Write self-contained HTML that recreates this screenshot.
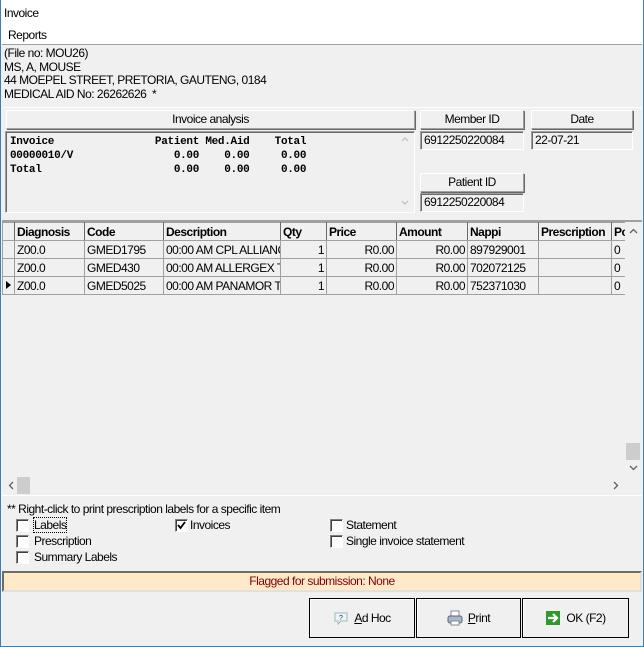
<!DOCTYPE html>
<html><head><style>
*{box-sizing:border-box;margin:0;padding:0}
body{width:644px;height:647px;position:relative;background:#f0f0f0;font-family:"Liberation Sans",sans-serif;font-size:12px;color:#000;overflow:hidden;letter-spacing:-0.5px}
.a{position:absolute;white-space:nowrap}
.btnh{position:absolute;background:#f0f0f0;border:1px solid #fff;border-right-color:#a0a0a0;border-bottom-color:#a0a0a0;box-shadow:1px 1px 0 #696969;text-align:center;line-height:16px}
.fld{position:absolute;border:1px solid #fff;border-top-color:#a0a0a0;border-left-color:#a0a0a0;box-shadow:inset 1px 1px 0 #696969;padding-left:3px;line-height:17px}
.mono{font-family:"Liberation Mono",monospace;font-size:11px;font-weight:bold;letter-spacing:-0.3px;line-height:14px;white-space:pre}
table{border-collapse:collapse;position:absolute;left:2px;top:222px}
td{border:1px solid #a0a0a0;height:18px;padding:0 2px;background:#f0f0f0;white-space:nowrap;overflow:hidden}
th{border:1px solid #a0a0a0;border-right-color:#696969;height:18px;padding:0 2px;text-align:left;font-weight:bold;background:#f0f0f0;white-space:nowrap;overflow:hidden}
.r{text-align:right}
.cb{position:absolute;width:13px;height:13px;background:#fff;border:1px solid #808080;border-right-color:#fff;border-bottom-color:#fff;box-shadow:inset 1px 1px 0 #404040}
.bb{position:absolute;top:598px;height:40px;border:1px solid #000;background:#f0f0f0;box-shadow:inset 1px 1px 0 #fff;display:flex;align-items:center;justify-content:center;gap:5px}
</style></head><body>
<div class="a" style="left:0;top:0;width:644px;height:44px;background:#fff"></div>
<div class="a" style="left:0;top:0;width:1px;height:647px;background:#3c7fb1"></div>
<div class="a" style="right:0;top:0;width:1px;height:647px;background:#3c7fb1"></div>
<div class="a" style="left:0;bottom:0;width:644px;height:1px;background:#3c7fb1"></div>
<div class="a" style="left:4px;top:6px">Invoice</div>
<div class="a" style="left:8px;top:28px">Reports</div>
<div class="a" style="left:2px;top:44px;width:640px;height:64px;border-top:1px solid #a0a0a0;border-bottom:1px solid #fff;background:#f0f0f0"></div>
<div class="a" style="left:4px;top:47px;line-height:13.5px">(File no: MOU26)<br>MS, A, MOUSE<br>44 MOEPEL STREET, PRETORIA, GAUTENG, 0184<br>MEDICAL AID No: 26262626&nbsp; *</div>

<div class="btnh" style="left:6px;top:110px;width:409px;height:19px">Invoice analysis</div>
<div class="btnh" style="left:420px;top:110px;width:104px;height:19px">Member ID</div>
<div class="btnh" style="left:531px;top:110px;width:102px;height:19px">Date</div>
<div class="fld" style="left:5px;top:131px;width:410px;height:82px;padding:3px 0 0 4px"><div class="mono">Invoice                Patient Med.Aid    Total
00000010/V                0.00    0.00     0.00
Total                     0.00    0.00     0.00</div></div>
<svg class="a" style="left:401px;top:136px" width="8" height="6"><path d="M1 5l3-3 3 3" stroke="#b8b8b8" fill="none"/></svg>
<svg class="a" style="left:401px;top:200px" width="8" height="6"><path d="M1 1l3 3 3-3" stroke="#b8b8b8" fill="none"/></svg>
<div class="fld" style="left:420px;top:131px;width:104px;height:19px">6912250220084</div>
<div class="fld" style="left:531px;top:131px;width:102px;height:19px">22-07-21</div>
<div class="btnh" style="left:420px;top:173px;width:104px;height:19px">Patient ID</div>
<div class="fld" style="left:420px;top:193px;width:104px;height:19px">6912250220084</div>

<div class="a" style="left:2px;top:220px;width:640px;height:276px;border-top:2px solid #a0a0a0;border-bottom:1px solid #fff"></div>
<table style="table-layout:fixed;width:623px">
<colgroup><col style="width:12px"><col style="width:70px"><col style="width:79px"><col style="width:117px"><col style="width:46px"><col style="width:70px"><col style="width:71px"><col style="width:71px"><col style="width:73px"><col style="width:14px"></colgroup>
<tr><th></th><th>Diagnosis</th><th>Code</th><th>Description</th><th>Qty</th><th>Price</th><th>Amount</th><th>Nappi</th><th>Prescription</th><th>Po</th></tr>
<tr><td></td><td>Z00.0</td><td>GMED1795</td><td>00:00 AM CPL ALLIANC</td><td class="r">1</td><td class="r">R0.00</td><td class="r">R0.00</td><td>897929001</td><td></td><td>0</td></tr>
<tr><td></td><td>Z00.0</td><td>GMED430</td><td>00:00 AM ALLERGEX T</td><td class="r">1</td><td class="r">R0.00</td><td class="r">R0.00</td><td>702072125</td><td></td><td>0</td></tr>
<tr><td style="padding:0"><svg width="10" height="10"><path d="M3 1l5 4-5 4z" fill="#000"/></svg></td><td>Z00.0</td><td>GMED5025</td><td>00:00 AM PANAMOR TA</td><td class="r">1</td><td class="r">R0.00</td><td class="r">R0.00</td><td>752371030</td><td></td><td>0</td></tr>
</table>
<div class="a" style="left:625px;top:222px;width:17px;height:254px;background:#f0f0f0"></div>
<svg class="a" style="left:629px;top:228px" width="9" height="6"><path d="M1 5l3.5-3.5 3.5 3.5" stroke="#606060" stroke-width="1.3" fill="none"/></svg>
<div class="a" style="left:626px;top:443px;width:14px;height:17px;background:#cdcdcd"></div>
<svg class="a" style="left:629px;top:465px" width="9" height="6"><path d="M1 1l3.5 3.5 3.5-3.5" stroke="#606060" stroke-width="1.3" fill="none"/></svg>
<div class="a" style="left:2px;top:477px;width:623px;height:17px;background:#f0f0f0"></div>
<svg class="a" style="left:8px;top:481px" width="6" height="9"><path d="M5 1l-3.5 3.5 3.5 3.5" stroke="#606060" stroke-width="1.3" fill="none"/></svg>
<div class="a" style="left:17px;top:477px;width:13px;height:17px;background:#cdcdcd"></div>
<svg class="a" style="left:613px;top:481px" width="6" height="9"><path d="M1 1l3.5 3.5-3.5 3.5" stroke="#606060" stroke-width="1.3" fill="none"/></svg>

<div class="a" style="left:7px;top:502px">** Right-click to print prescription labels for a specific item</div>
<div class="cb" style="left:16px;top:519px"></div><div class="a" style="left:34px;top:518px;outline:1px dotted #000">Labels</div>
<div class="cb" style="left:175px;top:519px"></div><svg class="a" style="left:177px;top:521px" width="9" height="9"><path d="M1 4l2.5 3L8 1" stroke="#000" stroke-width="1.8" fill="none"/></svg><div class="a" style="left:190px;top:518px">Invoices</div>
<div class="cb" style="left:330px;top:519px"></div><div class="a" style="left:346px;top:518px">Statement</div>
<div class="cb" style="left:16px;top:535px"></div><div class="a" style="left:34px;top:534px">Prescription</div>
<div class="cb" style="left:330px;top:535px"></div><div class="a" style="left:346px;top:534px">Single invoice statement</div>
<div class="cb" style="left:16px;top:551px"></div><div class="a" style="left:34px;top:550px">Summary Labels</div>

<div class="a" style="left:2px;top:571px;width:640px;height:21px;background:#ffe9c6;border:2px solid #6d6d6d;border-right-color:#e0e0e0;border-bottom-color:#e0e0e0;text-align:center;line-height:17px;color:#800000">Flagged for submission: None</div>

<div class="bb" style="left:309px;width:106px"><svg width="16" height="16"><path d="M2 3h12v8H8l-3 3v-3H2z" fill="#eef3f8" stroke="#9bb" /><text x="6" y="10" font-size="7" fill="#334">?</text></svg><span><u>A</u>d Hoc</span></div>
<div class="bb" style="left:416px;width:105px"><svg width="16" height="16"><rect x="4" y="1" width="8" height="6" fill="#fff" stroke="#889"/><rect x="1" y="6" width="14" height="7" rx="2" fill="#a8b8cc" stroke="#567"/><rect x="4" y="11" width="8" height="4" fill="#fff" stroke="#889"/></svg><span><u>P</u>rint</span></div>
<div class="bb" style="left:522px;width:107px"><svg width="16" height="16"><rect x="1" y="1" width="14" height="14" fill="#2e9a2e"/><path d="M3 8h8M8 4l4 4-4 4" stroke="#fff" stroke-width="2.2" fill="none"/></svg><span>OK (F2)</span></div>
</body></html>
